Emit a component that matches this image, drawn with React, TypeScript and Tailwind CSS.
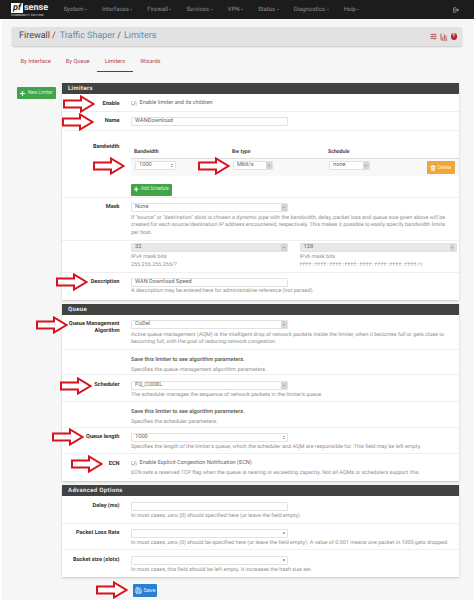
import type { ReactNode } from 'react';
import { ChartColumn, Plus, Save, SlidersHorizontal, Trash2, LogOut } from 'lucide-react';

const navItems = ['System', 'Interfaces', 'Firewall', 'Services', 'VPN', 'Status', 'Diagnostics', 'Help'];
const tabs = ['By Interface', 'By Queue', 'Limiters', 'Wizards'];

// red outlined arrows that sit over the form: [left, centre y]
const arrows = [
  [63, 103.5], [62, 121.5], [93, 166], [198, 166], [56, 281.5],
  [36, 325], [60, 385.5], [52, 437], [71, 464], [96, 590],
];

function Arrow({ x, y }: { x: number; y: number }) {
  return (
    <svg className="absolute" style={{ left: x, top: y - 9 }} width="32" height="18" viewBox="0 0 32 18">
      <polygon points="1,5.5 18,5.5 18,1.5 30.5,9 18,16.5 18,12.5 1,12.5" fill="#fff" stroke="#d8121c" strokeWidth="2" />
    </svg>
  );
}

function Panel({ title, children }: { title: string; children: ReactNode }) {
  return (
    <div className="bg-white shadow-[0_1px_2px_rgba(0,0,0,0.2)]">
      <div className="h-[11px] bg-[#424242] pl-[6px] text-[6px] leading-[11px] font-bold tracking-[0.35px] text-[#e8e8e8]">{title}</div>
      {children}
    </div>
  );
}

function Row({ h, pt, label, children, last }: { h: number; pt: number; label?: ReactNode; children: ReactNode; last?: boolean }) {
  return (
    <div className={`flex ${last ? '' : 'border-b border-[#efefef]'}`} style={{ height: h, paddingTop: pt }}>
      <div className="w-[57.5px] shrink-0 pt-[1px] text-right text-[5.6px] leading-[7.5px] font-bold whitespace-nowrap text-[#333]">{label}</div>
      <div className="ml-[11.5px] min-w-0 flex-1">{children}</div>
    </div>
  );
}

function Help({ children }: { children: ReactNode }) {
  return <p className="text-[5.45px] leading-[7.8px] text-[#8e8e8e]">{children}</p>;
}

function Field({ value, w = 'w-[157px]', kind, disabled }: { value?: string; w?: string; kind?: 'select' | 'number'; disabled?: boolean }) {
  return (
    <div className={`flex h-[9px] shrink-0 items-center justify-between rounded-[1px] border border-[#e2e2e2] pl-[3px] text-[5.7px] text-[#666] ${w} ${disabled ? 'bg-[#e8e8e8]' : 'bg-white'}`}>
      <span>{value}</span>
      {kind === 'select' && (
        <span className="mr-[0.5px] flex h-[7px] w-[5.5px] items-center justify-center rounded-[1px] bg-[#d4d4d4]">
          <span className="border-x-[1.2px] border-t-[1.5px] border-x-transparent border-t-[#777]" />
        </span>
      )}
      {kind === 'number' && (
        <span className="mr-[2px] flex flex-col items-center gap-[0.5px]">
          <span className="border-x-[1.2px] border-b-[1.5px] border-x-transparent border-b-[#555]" />
          <span className="border-x-[1.2px] border-t-[1.5px] border-x-transparent border-t-[#555]" />
        </span>
      )}
    </div>
  );
}

function CheckLine({ text }: { text: string }) {
  return (
    <div className="flex h-[7px] items-center gap-[3px] text-[5.6px] whitespace-nowrap text-[#666]">
      <svg width="5.5" height="5.5" viewBox="0 0 6 6" className="shrink-0">
        <rect x="0.3" y="0.3" width="5.4" height="5.4" rx="0.8" fill="#fff" stroke="#a8a8a8" strokeWidth="0.6" />
        <polyline points="1.3,3 2.5,4.3 4.8,1.6" fill="none" stroke="#777" strokeWidth="0.8" />
      </svg>
      {text}
    </div>
  );
}

function SaveNote({ children }: { children: string }) {
  return (
    <>
      <p className="pt-[1px] text-[5.6px] leading-[7px] font-medium text-[#555]">Save this limiter to see algorithm parameters.</p>
      <div className="mt-[3px]"><Help>{children}</Help></div>
    </>
  );
}

export default function App() {
  return (
    <div className="relative h-[604px] w-[474px] overflow-hidden bg-white font-['Roboto',sans-serif] [text-rendering:geometricPrecision]">
      {/* Navbar */}
      <nav className="flex h-[19px] items-center bg-[#1c1c1c]">
        <div className="ml-[11px] w-[42px] shrink-0">
          <div className="flex h-[11px] items-center">
            <span className="h-[10px] w-[12px] bg-white text-center text-[9px] leading-[10px] font-bold text-[#1c1c1c] italic">pf</span>
            <span className="ml-[1px] text-[9px] leading-[10px] font-bold text-[#f0f0f0]">sense</span>
          </div>
          <div className="text-[2.9px] leading-[4px] font-bold tracking-[0.2px] whitespace-nowrap text-[#bbb]">COMMUNITY EDITION</div>
        </div>
        <div className="ml-[10.5px] flex gap-[15px] text-[6px] text-[#8f8f8f]">
          {navItems.map(item => (
            <span key={item} className="flex items-center gap-[1.5px]">
              {item}
              <span className="border-x-[1.2px] border-t-[1.5px] border-x-transparent border-t-[#8f8f8f]" />
            </span>
          ))}
        </div>
        <LogOut className="ml-auto mr-[15px] h-[6px] w-[6px] text-[#ccc]" strokeWidth={3} />
      </nav>

      <div className="ml-[2px] h-[581px] bg-[#f6f6f6] pt-[8px] pl-[10px]">
        {/* Breadcrumb */}
        <div className="flex h-[19px] w-[450px] items-center rounded-[2px] bg-[#e2e2e2] pr-[5px] pl-[7px] text-[9px] shadow-[0_1px_2px_rgba(0,0,0,0.2)]">
          <span className="text-[#444]">Firewall</span>
          <span className="ml-[2px] text-[#a33]">/</span>
          <span className="ml-[4px] text-[#5f8fb5]">Traffic Shaper</span>
          <span className="ml-[2px] text-[#555]">/</span>
          <span className="ml-[3px] text-[#5f8fb5]">Limiters</span>
          <div className="ml-auto flex items-center gap-[3px] text-[#b23a3a]">
            <SlidersHorizontal className="h-[7px] w-[7px]" strokeWidth={2.5} />
            <ChartColumn className="h-[8px] w-[8px]" strokeWidth={2.5} />
            <span className="flex h-[6.5px] w-[6.5px] items-center justify-center rounded-full bg-[#b3262b] text-[5px] leading-none font-bold text-white">?</span>
          </div>
        </div>

        {/* Tabs */}
        <div className="mt-[9px] flex h-[17px] items-start pl-[1px] text-[5.7px] text-[#b2474b]">
          {tabs.map(tab => (
            <span
              key={tab}
              className={`flex h-[17px] items-center border-b-[1px] px-[7.5px] pt-[0.5px] pb-[1px] ${tab === 'Limiters' ? 'border-[#b5161b]' : 'border-transparent'}`}
            >
              {tab}
            </span>
          ))}
        </div>

        <div className="mt-[11px] flex">
          {/* Side button */}
          <div className="w-[50px] shrink-0 pt-[4px] pl-[5px]">
            <button className="flex h-[12px] w-[39px] items-center gap-[2px] rounded-[1px] bg-[#3fa548] pl-[2px] text-[4.6px] whitespace-nowrap text-[#dff0df]">
              <Plus className="h-[7px] w-[7px] shrink-0 text-white" strokeWidth={4} />
              New Limiter
            </button>
          </div>

          {/* Form */}
          <div className="w-[396.5px] shrink-0">
            <Panel title="Limiters">
              <Row h={17.5} pt={6} label="Enable"><CheckLine text="Enable limiter and its children" /></Row>
              <Row h={19} pt={5} label="Name"><Field value="WANDownload" /></Row>
              <Row h={67} pt={12.5} label="Bandwidth">
                <div className="flex pl-[3px] text-[5.2px] leading-[7px] font-bold text-[#444]">
                  <span className="mt-[5.5px] w-[98px]">Bandwidth</span>
                  <span className="mt-[5.5px] w-[96px]">Bw type</span>
                  <span className="mt-[5.5px]">Schedule</span>
                </div>
                <div className="mt-[2px] flex h-[18px] items-start border-t border-[#dedede] bg-[#f8f8f8] pt-[2.5px] pl-[4px]">
                  <Field value="1000" w="w-[41px]" kind="number" />
                  <div className="ml-[57px]"><Field value="Mbit/s" w="w-[40px]" kind="select" /></div>
                  <div className="ml-[56px]"><Field value="none" w="w-[41px]" kind="select" /></div>
                  <button className="ml-[57px] flex h-[13px] w-[28px] items-center gap-[1.5px] rounded-[1px] bg-[#f0a63c] pl-[3px] text-[4.8px] text-[#fbeeda]">
                    <Trash2 className="h-[6px] w-[6px] shrink-0 text-white" strokeWidth={3} />
                    Delete
                  </button>
                </div>
                <button className="mt-[8px] flex h-[12px] w-[41px] items-center gap-[1.5px] rounded-[1px] bg-[#3fa548] pl-[2px] text-[4.5px] whitespace-nowrap text-[#dff0df]">
                  <Plus className="h-[6.5px] w-[6.5px] shrink-0 text-white" strokeWidth={4} />
                  Add Schedule
                </button>
              </Row>
              <Row h={43} pt={5} label="Mask">
                <Field value="None" kind="select" />
                <div className="mt-[3px] pr-[8px]">
                  <Help>If "source" or "destination" slots is chosen a dynamic pipe with the bandwidth, delay, packet loss and queue size given above will be created for each source/destination IP address encountered, respectively. This makes it possible to easily specify bandwidth limits per host.</Help>
                </div>
              </Row>
              <Row h={32} pt={2.5}>
                <div className="flex gap-[11.5px]">
                  <div className="w-[157px]">
                    <Field value="32" kind="select" disabled />
                    <div className="mt-[2px]"><Help>IPv4 mask bits<br />255.255.255.255/?</Help></div>
                  </div>
                  <div className="w-[157px]">
                    <Field value="128" kind="select" disabled />
                    <div className="mt-[2px]">
                      <Help>IPv6 mask bits<br /><span className="font-['Liberation_Mono',monospace] text-[5px]">ffff:ffff:ffff:ffff:ffff:ffff:ffff:ffff/?</span></Help>
                    </div>
                  </div>
                </div>
              </Row>
              <Row h={27} pt={5} label="Description" last>
                <Field value="WAN Download Speed" />
                <div className="mt-[1.5px]"><Help>A description may be entered here for administrative reference (not parsed).</Help></div>
              </Row>
            </Panel>

            <div className="mt-[4px]">
              <Panel title="Queue">
                <Row h={35} pt={5} label={<>Queue Management<br />Algorithm</>}>
                  <Field value="CoDel" kind="select" />
                  <div className="mt-[3px] pr-[8px]">
                    <Help>Active queue management (AQM) is the intelligent drop of network packets inside the limiter, when it becomes full or gets close to becoming full, with the goal of reducing network congestion.</Help>
                  </div>
                </Row>
                <Row h={25.5} pt={6}><SaveNote>Specifies the queue management algorithm parameters.</SaveNote></Row>
                <Row h={27} pt={5.5} label="Scheduler">
                  <Field value="FQ_CODEL" kind="select" />
                  <div className="mt-[2px]"><Help>The scheduler manages the sequence of network packets in the limiter's queue.</Help></div>
                </Row>
                <Row h={25.5} pt={6}><SaveNote>Specifies the scheduler parameters.</SaveNote></Row>
                <Row h={26} pt={5.5} label="Queue length">
                  <Field value="1000" kind="number" />
                  <div className="mt-[2px]"><Help>Specifies the length of the limiter's queue, which the scheduler and AQM are responsible for. This field may be left empty.</Help></div>
                </Row>
                <Row h={27} pt={6.5} label="ECN" last>
                  <CheckLine text="Enable Explicit Congestion Notification (ECN)" />
                  <div className="mt-[2.5px]"><Help>ECN sets a reserved TCP flag when the queue is nearing or exceeding capacity. Not all AQMs or schedulers support this.</Help></div>
                </Row>
              </Panel>
            </div>

            <div className="mt-[4.5px]">
              <Panel title="Advanced Options">
                <Row h={27.5} pt={5.5} label="Delay (ms)">
                  <Field />
                  <div className="mt-[2px]"><Help>In most cases, zero (0) should specified here (or leave the field empty).</Help></div>
                </Row>
                <Row h={26.5} pt={5} label="Packet Loss Rate">
                  <Field kind="number" />
                  <div className="mt-[2px]"><Help>In most cases, zero (0) should be specified here (or leave the field empty). A value of 0.001 means one packet in 1000 gets dropped.</Help></div>
                </Row>
                <Row h={26.5} pt={5.5} label="Bucket size (slots)" last>
                  <Field kind="number" />
                  <div className="mt-[2px]"><Help>In most cases, this field should be left empty. It increases the hash size set.</Help></div>
                </Row>
              </Panel>
            </div>

            <button className="mt-[7px] ml-[71px] flex h-[13px] w-[24px] items-center gap-[1.5px] rounded-[1px] bg-[#2a7fd0] pl-[2px] text-[5.6px] text-[#e4effa]">
              <Save className="h-[7px] w-[7px] shrink-0 text-white" strokeWidth={2.5} />
              Save
            </button>
          </div>
        </div>
      </div>

      {arrows.map(([x, y]) => <Arrow key={`${x}-${y}`} x={x} y={y} />)}
    </div>
  );
}
